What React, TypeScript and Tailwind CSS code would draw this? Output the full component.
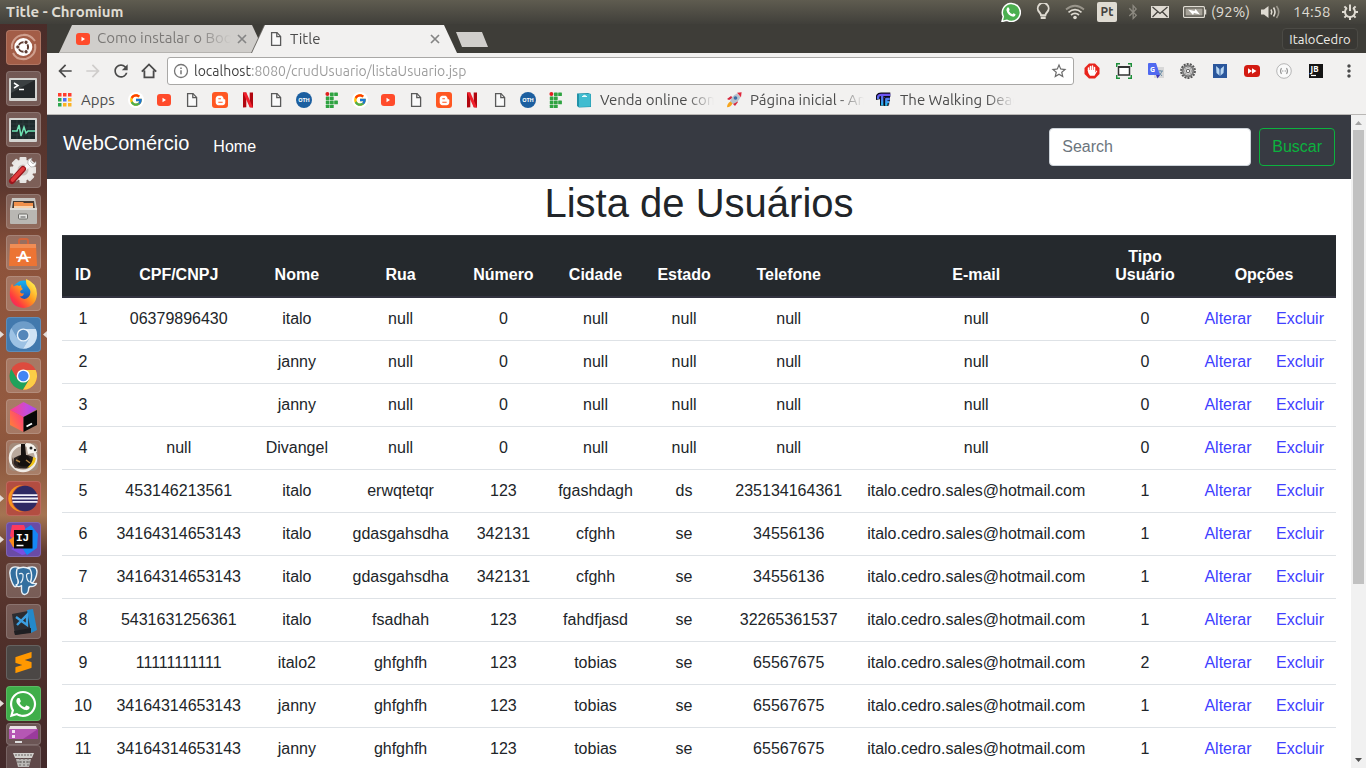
import React from "react";
import { FaWhatsapp, FaBluetoothB, FaBloggerB } from "react-icons/fa";
import { FcGoogle } from "react-icons/fc";
import { SiSublimetext } from "react-icons/si";
import { MdRefresh, MdArrowBack, MdArrowForward, MdStarBorder, MdMoreVert } from "react-icons/md";

/* ---------- small shared icons ---------- */

const YouTube = () => (
  <svg width="16" height="16" viewBox="0 0 16 16" className="shrink-0">
    <rect x="1" y="2" width="14" height="12" rx="3" fill="#ff4b2b" />
    <path d="M6.5 5.8 L10 8 L6.5 10.2Z" fill="#fff" />
  </svg>
);

const Doc = () => (
  <svg width="16" height="16" viewBox="0 0 16 16" fill="none" stroke="#5a5a5a" strokeWidth="1.3" className="shrink-0">
    <path d="M3.6 1.6 H9 L12.6 5.4 V14.4 H3.6Z" fill="#fafafa" />
    <path d="M8.8 1.6 V5.6 H12.6" />
  </svg>
);

const Google = () => (
  <span className="flex h-4 w-4 items-center justify-center rounded-full bg-white">
    <FcGoogle size={14} />
  </span>
);

const Blogger = () => (
  <span className="flex h-4 w-4 items-center justify-center rounded-[3px] bg-[#ff5722]">
    <FaBloggerB size={11} color="#fff" />
  </span>
);

const Netflix = () => (
  <svg width="16" height="16" viewBox="0 0 16 16">
    <path d="M3 0.5 H6.3 V15.2 L3 15.6Z" fill="#b1060f" />
    <path d="M9.7 0.5 H13 V15.6 L9.7 15.2Z" fill="#b1060f" />
    <path d="M3 0.5 H6.3 L13 15.6 L9.7 15.2Z" fill="#f0202c" />
  </svg>
);

const Oth = () => (
  <svg width="16" height="16" viewBox="0 0 16 16">
    <circle cx="8" cy="8" r="8" fill="#1c5fa0" />
    <text x="8" y="10" textAnchor="middle" fontSize="5.5" fontWeight="700" fill="#fff" fontFamily="Noto Sans, sans-serif">OTH</text>
  </svg>
);

const ifCells = [[1, 0], [2, 0], [0, 1], [1, 1], [0, 2], [1, 2], [2, 2], [0, 3], [1, 3]];
const IfLogo = () => (
  <svg width="16" height="16" viewBox="0 0 16 16">
    <circle cx="3.4" cy="2" r="2" fill="#e02020" />
    {ifCells.map(([x, y]) => (
      <rect key={`${x}-${y}`} x={1.8 + x * 4.2} y={0.4 + y * 4.1} width="3.7" height="3.6" rx="0.5" fill="#2fa341" />
    ))}
  </svg>
);

const Bag = () => (
  <svg width="16" height="16" viewBox="0 0 16 16">
    <path d="M1 1.5 L12 1 L15 2 V15 L3 15.5 L1 14Z" fill="#2292a8" />
    <path d="M3 2 H14.5 V14.5 L3 15Z" fill="#41bcd0" />
    <path d="M6 4.5 H11 M7 4.5 Q8.5 2 10 4.5" stroke="#e8fafc" strokeWidth="1.2" fill="none" />
  </svg>
);

const Rocket = () => (
  <svg width="16" height="16" viewBox="0 0 16 16">
    <path d="M1 7 L5 4 L7 6 L3 8Z M9 14 L12 10 L10 8 L7 12Z" fill="#d7263d" />
    <path d="M4 10 Q5 4 11 1.5 L14.5 5 Q12 11 6 12Z" fill="#b7c3cf" />
    <path d="M11 0.8 L15.6 0.2 L15 5.2Z" fill="#e0273c" />
    <circle cx="9.5" cy="6" r="1.8" fill="#3b6ea5" />
    <path d="M4.5 9.5 L6.5 11.5 Q5 15 1 15.2 Q1 11.5 4.5 9.5Z" fill="#f6a51c" />
  </svg>
);

const TfLogo = () => (
  <svg width="16" height="16" viewBox="0 0 16 16" fill="none" strokeLinejoin="round">
    <defs>
      <linearGradient id="tf" gradientUnits="userSpaceOnUse" x1="0" y1="1" x2="0" y2="15">
        <stop offset="0" stopColor="#7b3ff2" />
        <stop offset="1" stopColor="#19d3f0" />
      </linearGradient>
    </defs>
    <path d="M2.2 7.500 Q1 2.800 5 2.800 H14.300 M6.200 3 V13.800 M10.300 14 V7 H14 M10.300 10.200 H13.200" stroke="#0b0b1e" strokeWidth="4.400" />
    <path d="M2.2 7 Q1.400 2.800 5 2.800 H14.300 M6.200 3 V13.500 M10.300 13.700 V7 H13.800 M10.300 10.200 H13" stroke="url(#tf)" strokeWidth="2.300" />
  </svg>
);

const CloseX = () => (
  <svg width="10" height="10" viewBox="0 0 10 10" stroke="#858585" strokeWidth="1.7">
    <path d="M1 1 L9 9 M9 1 L1 9" />
  </svg>
);

/* ---------- launcher ---------- */

const Disc = ({ a, b, c, hub, ring }: { a: string; b: string; c: string; hub: string; ring: string }) => (
  <svg width="35" height="35" viewBox="0 0 35 35">
    <circle cx="17.3" cy="18" r="13.8" fill={a} />
    <path d="M5.3 11.1 A13.8 13.8 0 0 0 17 31.8 L23.2 21.5 L17.3 18 L11.4 21.5Z" fill={b} />
    <path d="M17 31.8 A13.8 13.8 0 0 0 29.7 12 H17.3 L23.2 21.5Z" fill={c} />
    <circle cx="17.3" cy="18" r="6.6" fill={ring} />
    <circle cx="17.3" cy="18" r="5.2" fill={hub} />
  </svg>
);

const teeth = [0, 45, 90, 135, 180, 225, 270, 315];

type App = { name: string; tile?: string; running?: boolean; focused?: boolean; art: React.ReactNode };

const apps: App[] = [
  {
    name: "Pesquisar",
    tile: "bg-[#a35d47]",
    art: (
      <svg width="35" height="35" viewBox="0 0 35 35" fill="none">
        <path d="M6 19 A12 12 0 0 1 17 5 Q24 4 29 11 M29 14 Q31 25 20 29 Q10 30 7 23" stroke="#cf9f8e" strokeWidth="2" />
        <circle cx="17.3" cy="17" r="9" fill="#fff" />
        <circle cx="17.3" cy="17" r="4.800" stroke="#5e3c32" strokeWidth="2" />
        {[180, 60, -60].map((d) => (
          <g key={d} transform={`rotate(${d} 17.3 17)`}>
            <circle cx="22.800" cy="17" r="2.100" fill="#5e3c32" stroke="#fff" strokeWidth="0.900" />
          </g>
        ))}
      </svg>
    ),
  },
  {
    name: "Terminal",
    art: (
      <svg width="35" height="35" viewBox="0 0 35 35">
        <rect x="3" y="7" width="28" height="23" rx="1" fill="#d3d3d0" />
        <rect x="5" y="9" width="24" height="18" fill="#24282a" />
        <path d="M5 9 H29 L5 22Z" fill="#3b4042" />
        <path d="M8 12 L12 14.5 L8 17 M13 18.5 H18" stroke="#fff" strokeWidth="1.5" fill="none" />
      </svg>
    ),
  },
  {
    name: "Monitor do sistema",
    art: (
      <svg width="35" height="35" viewBox="0 0 35 35">
        <rect x="3" y="6" width="28" height="24" rx="1" fill="#d3d3d0" />
        <rect x="5" y="8" width="24" height="19" fill="#1e2a2c" />
        <path d="M5 12 H29 M5 16 H29 M5 23 H29 M11 8 V27 M17 8 V27 M23 8 V27" stroke="#344548" strokeWidth="0.6" />
        <path d="M6 19 H11 L13 13 L15 24 L18 15 L20 21 L22 19 H29" stroke="#6fe3b4" strokeWidth="1.5" fill="none" />
      </svg>
    ),
  },
  {
    name: "Configurações",
    art: (
      <svg width="35" height="35" viewBox="0 0 35 35">
        {teeth.map((d) => (
          <rect key={d} x="13.5" y="4" width="7" height="6" rx="1" fill="#e6e4e2" transform={`rotate(${d} 17 17)`} />
        ))}
        <circle cx="17" cy="17" r="10.5" fill="#eceae8" />
        <circle cx="17" cy="17" r="5.5" fill="#c7c1bd" />
        <path d="M17 17 L24 11" stroke="#f7f7f7" strokeWidth="4" />
        <path d="M22 11 Q21 6 26 5 L24.5 8.5 L27 11 L30 8.5 Q31 14 25 14Z" fill="#fff" stroke="#999" strokeWidth="0.6" />
        <path d="M6 28 L17 16" stroke="#98161c" strokeWidth="6" strokeLinecap="round" />
        <path d="M6.5 27 L17 15.8" stroke="#e03a3c" strokeWidth="3.6" strokeLinecap="round" />
      </svg>
    ),
  },
  {
    name: "Arquivos",
    art: (
      <svg width="35" height="35" viewBox="0 0 35 35">
        <path d="M6 4 H29 L31 15 H4Z" fill="#c9c7c3" />
        <path d="M7 7 H28 L29 15 H6Z" fill="#473a33" />
        <path d="M8 8 H17 L18 9 H27 V15 H8Z" fill="#f0904c" />
        <path d="M8 12 H27 V15 H8Z" fill="#f7d2ae" />
        <rect x="4" y="14" width="27" height="16" rx="1" fill="#b9b7b3" />
        <path d="M4 15 H31" stroke="#e8e7e5" strokeWidth="1.5" />
        <rect x="12.5" y="20" width="9" height="5" rx="1" fill="#e6e6e4" stroke="#6d6c69" />
        <path d="M14.5 23 H19.5" stroke="#555" />
      </svg>
    ),
  },
  {
    name: "Programas",
    art: (
      <svg width="35" height="35" viewBox="0 0 35 35">
        <path d="M13 10 V6 Q13 4 15 4 H20 Q22 4 22 6 V10" stroke="#d1643c" strokeWidth="2" fill="none" />
        <path d="M4 9 H30 L31 31 H3Z" fill="#ec7434" />
        <path d="M4 9 H30 V13 H4Z" fill="#f08d55" />
        <text x="17.3" y="27" fontSize="16" fontWeight="700" textAnchor="middle" fill="#fff" fontFamily="Lato, sans-serif">A</text>
        <path d="M10 22.5 H25" stroke="#fff" strokeWidth="1.6" />
      </svg>
    ),
  },
  {
    name: "Firefox",
    art: (
      <svg width="35" height="35" viewBox="0 0 35 35">
        <defs>
          <linearGradient id="fx" x1="1" y1="0" x2="0" y2="1">
            <stop offset="0.1" stopColor="#fff44f" />
            <stop offset="0.45" stopColor="#ff9a1f" />
            <stop offset="0.75" stopColor="#ff3a3f" />
            <stop offset="1" stopColor="#e3167f" />
          </linearGradient>
          <linearGradient id="fxb" x1="0" y1="0" x2="0" y2="1">
            <stop offset="0" stopColor="#16b4f2" />
            <stop offset="1" stopColor="#2438a8" />
          </linearGradient>
        </defs>
        <circle cx="18" cy="16" r="11.5" fill="url(#fxb)" />
        <path d="M20 3 Q31 7 31 18 Q30 31 17.5 32 Q5 31 3.8 19 Q3.5 12 6 7.500 L7.500 10.500 L10 9.500 Q12 9 13 10 L15 9 Q15 12 17 13 Q14 14.500 14 16 Q15 18 18 17.500 Q17 21 13.500 20.500 Q18 25 22.500 21 Q26.500 16 22 11 Q19.500 8 20 3Z" fill="url(#fx)" />
      </svg>
    ),
  },
  { name: "Chromium", tile: "bg-[#4279ad]", running: true, focused: true, art: <Disc a="#6e9dc9" b="#9dc2e4" c="#cfe3f5" hub="#5386ba" ring="#e8f2fb" /> },
  { name: "Google Chrome", art: <Disc a="#dd4b3e" b="#1fa25b" c="#fccd46" hub="#4285f4" ring="#fff" /> },
  {
    name: "JetBrains Toolbox",
    art: (
      <svg width="35" height="35" viewBox="0 0 35 35">
        <defs>
          <linearGradient id="tbTop" x1="0" y1="0.5" x2="1" y2="0.5">
            <stop offset="0" stopColor="#ff3f86" />
            <stop offset="0.6" stopColor="#c94bd8" />
            <stop offset="1" stopColor="#a64bf0" />
          </linearGradient>
          <linearGradient id="tbLeft" x1="1" y1="0" x2="0" y2="1">
            <stop offset="0" stopColor="#ff318c" />
            <stop offset="1" stopColor="#ff8a2b" />
          </linearGradient>
        </defs>
        <path d="M17.500 3 L31 10 L17.500 18 L4 11Z" fill="url(#tbTop)" />
        <path d="M4 11 L17.500 18 V33 L4 26Z" fill="url(#tbLeft)" />
        <path d="M17.500 18 L31 11 V26 L17.500 33Z" fill="#080808" />
        <path d="M20.500 27.500 L26 24.500" stroke="#fff" strokeWidth="1.8" />
      </svg>
    ),
  },
  {
    name: "DBeaver",
    art: (
      <svg width="35" height="35" viewBox="0 0 35 35">
        <rect x="3" y="3" width="29" height="28" rx="5" fill="#a28b7b" />
        <circle cx="17" cy="18" r="13" fill="#b9a99d" stroke="#f1ece6" strokeWidth="2.500" />
        <path d="M20 3 Q30 3 31 12 L22 14Z" fill="#f7f4ee" />
        <path d="M7 17 Q8 27 16 29 L9 28 Q4 23 7 17Z" fill="#5b4a3f" />
        <path d="M8 18 Q17 12 27 17 Q29 24 22 28 Q12 30 8 24Z" fill="#2b2320" />
        <path d="M15 4 H19 L20 15 Q25 17 24 25 Q19 28 12 25 Q11 17 15 15Z" fill="#15110f" />
        <path d="M21 28 Q29 26 30 18 L27 17 Q27 23 21 28Z" fill="#f0c419" />
        <circle cx="25" cy="8" r="1.500" fill="#222" />
        <circle cx="29" cy="10" r="1.200" fill="#222" />
        <path d="M10 20 L14 22 M20 20 L24 23" stroke="#b08445" strokeWidth="1.500" />
      </svg>
    ),
  },
  {
    name: "Eclipse",
    tile: "bg-[#b34d41]",
    running: true,
    art: (
      <svg width="35" height="35" viewBox="0 0 35 35">
        <circle cx="15.500" cy="17.500" r="13.200" fill="#f7941e" />
        <circle cx="18.800" cy="17.500" r="13.400" fill="#b34d41" />
        <circle cx="19" cy="17.500" r="12.700" fill="#2f2a63" />
        <path d="M6.500 14.200 H31.500 M6 17.500 H32 M6.500 20.800 H31.500" stroke="#f2f0fa" strokeWidth="1.800" />
      </svg>
    ),
  },
  {
    name: "IntelliJ IDEA",
    tile: "bg-[#6a4ba6]",
    running: true,
    art: (
      <svg width="35" height="35" viewBox="0 0 35 35">
        <path d="M6 3 H18 L22 14 L12 22 L4 14Z" fill="#fb3a5e" />
        <path d="M3 18 L12 12 L14 28 L7 25Z" fill="#f98a1c" />
        <path d="M19 7 L25 3 L32 12 L31 26 L21 33 L16 27Z" fill="#1587f5" />
        <path d="M5 27 L14 22 L20 32 L16 33Z" fill="#7a4fe0" />
        <rect x="8" y="8" width="18.500" height="18.500" fill="#080808" />
        <text x="10" y="18.500" fontSize="11" fontWeight="700" fill="#fff" fontFamily="Liberation Mono, monospace">IJ</text>
        <path d="M10.500 23.500 H17.500" stroke="#fff" strokeWidth="1.500" />
      </svg>
    ),
  },
  {
    name: "pgAdmin",
    art: (
      <svg width="35" height="35" viewBox="0 0 35 35" fill="#336f9f" stroke="#e9f1f7" strokeWidth="1.400" strokeLinejoin="round">
        <path d="M13 4.500 Q4 2 3.800 10 Q4.500 18 8 23 Q10 25 12 21.500Z" />
        <path d="M22 4.500 Q31 2 31 9 Q30.500 16 25.500 21 L21 20Z" />
        <path d="M11 6 Q17 2.500 24 6 Q27 12 24.500 19 Q26 21 30.500 20.500 Q29 24 24 23.500 Q22.500 24 22.500 27 Q22 31 18.500 31.500 Q15.500 31 15.500 27 V22.500 Q12 25 10 22 Q13.500 20.500 12 17 Q9.500 12 11 6Z" />
        <path d="M13 11 Q15.500 9.500 17 11.500 Q17.500 17 14.500 20 M23.500 10.500 Q21 10 20.500 12 Q20.500 17 23.500 19" fill="none" strokeWidth="1.200" />
      </svg>
    ),
  },
  {
    name: "Visual Studio Code",
    art: (
      <svg width="35" height="35" viewBox="0 0 35 35">
        <path d="M6 10 L22 7 L26 28 L9 31Z" fill="#2c2c30" />
        <path d="M21 6 L27 5 L31 26 L25 29Z" fill="#2489ca" />
        <path d="M8 27 L25 24 V29 L9 31Z" fill="#1f1f22" />
        <path d="M10 13 L21 21 V11 L11 21" stroke="#3c9fe0" strokeWidth="2.400" fill="none" />
      </svg>
    ),
  },
  { name: "Sublime Text", tile: "bg-[#4b4745]", art: <SiSublimetext size={21} color="#ff9800" /> },
  { name: "WhatsApp", tile: "bg-[#3fae49]", running: true, art: <FaWhatsapp size={30} color="#fff" /> },
];

const Marker = ({ side }: { side: "left" | "right" }) => (
  <svg width="4" height="7" viewBox="0 0 4 7" className={side === "left" ? "absolute left-0 top-[14px]" : "absolute right-0 top-[14px]"}>
    <path d={side === "left" ? "M0 0 L4 3.500 L0 7Z" : "M4 0 L0 3.500 L4 7Z"} fill="#e4dcd8" />
  </svg>
);

const tileBase = "flex h-[35px] w-[35px] items-center justify-center overflow-hidden rounded-[4px] border border-white/15 [&>svg]:shrink-0";

const Launcher = () => (
  <nav
    aria-label="Lançador"
    className="flex w-[47px] shrink-0 flex-col gap-[6px] overflow-hidden bg-[linear-gradient(to_bottom,#4a2c29_0%,#5d382f_22%,#8d533b_32%,#935a40_52%,#8b563d_58%,#a57452_66%,#5f3a31_71%,#50302a_82%,#43292a_100%)] pt-[6px]"
  >
    {apps.map((a) => (
      <div key={a.name} className="relative flex shrink-0 justify-center pr-px">
        {a.running && <Marker side="left" />}
        <button type="button" aria-label={a.name} className={`${tileBase} ${a.tile ?? "bg-white/20"}`}>
          {a.art}
        </button>
        {a.focused && <Marker side="right" />}
      </div>
    ))}
    <div className="-mt-[4px] flex shrink-0 flex-col items-center">
      <button type="button" aria-label="Área de trabalho" className="h-[22px] w-[35px] rounded-[4px] border border-white/15 bg-white/20">
        <svg width="33" height="20" viewBox="0 0 33 20">
          <path d="M3 2 H29 L30 5 H2Z" fill="#e9e1e6" />
          <path d="M2 5 H31 V15 H2Z" fill="#9a3a9c" />
          <path d="M2 5 H31 L16 15 H2Z" fill="#b557b4" />
          <rect x="5" y="6" width="3" height="3" fill="#f1e4f1" />
          <rect x="5" y="11" width="3" height="3" fill="#f1e4f1" />
          <rect x="8" y="17" width="7" height="2" fill="#ddd" />
        </svg>
      </button>
      <button type="button" aria-label="Lixeira" className="h-[26px] w-[35px] rounded-[4px] border border-white/15 bg-white/15">
        <svg width="33" height="24" viewBox="0 0 33 24">
          <path d="M6 7 H27 L25 12 H8Z" fill="#d2d0cd" />
          <path d="M9 13 H24 L22 21 H11Z" fill="#bab8b5" />
          <path d="M8 9 H25 M10 16 H23 M13 12 V20 M17 12 V20 M21 12 V20" stroke="#6b6765" strokeDasharray="2 1" />
        </svg>
      </button>
    </div>
  </nav>
);

/* ---------- system bar ---------- */

const SystemBar = () => (
  <header className="flex h-6 shrink-0 items-center justify-between bg-[linear-gradient(to_bottom,#5f5c50,#403f3a)] pl-[6px] pr-2 text-[#dfdbd2]">
    <h1 className="text-[15px] font-bold">Title - Chromium</h1>
    <div className="flex items-center">
      <svg width="20" height="20" viewBox="0 0 20 20" className="mr-3">
        <path d="M1 19.500 L2.300 14.500 A9 9 0 1 1 5.800 18.200Z" fill="#4caf50" stroke="#fff" strokeWidth="1.500" />
        <path d="M6 6.200 Q7 4.600 8 6 L8.700 7.900 L7.900 9 Q9 11.200 11.400 12.300 L12.500 11.300 L14.600 12.300 Q14.500 14.700 12.300 14.700 Q7 14 5.500 8.500 Q5.300 7.300 6 6.200Z" fill="#fff" />
      </svg>
      <svg width="20" height="18" viewBox="0 0 20 18" className="mr-3" fill="none" stroke="#dfdbd2" strokeWidth="1.900">
        <path d="M8 12.200 Q7.900 10.800 6.200 9 A5.400 5.400 0 1 1 14.200 9 Q12.500 10.800 12.400 12.200Z" />
        <path d="M7.700 13.500 H12.700 V16 H7.700Z" fill="#dfdbd2" stroke="none" />
      </svg>
      <svg width="20" height="16" viewBox="0 0 20 16" className="mr-3" fill="none" strokeWidth="1.700">
        <path d="M1 5.500 Q10 -2 19 5.500" stroke="#99958b" />
        <path d="M3.500 8.300 Q10 3 16.500 8.300 M6 11 Q10 7.700 14 11" stroke="#dfdbd2" />
        <circle cx="10" cy="13.500" r="1.800" fill="#dfdbd2" />
      </svg>
      <span className="mr-2 flex h-5 w-5 items-center justify-center rounded-[2px] bg-[#dfdbd2] text-xs font-semibold text-[#45433e]">Pt</span>
      <FaBluetoothB size={16} color="#8d8a81" className="mr-[10px]" />
      <svg width="18" height="12" viewBox="0 0 18 12" className="mr-[14px]">
        <rect width="18" height="12" fill="#dfdbd2" />
        <path d="M1.500 1 L9 7.500 L16.500 1 M1.500 11 L6.500 6 M16.500 11 L11.500 6" stroke="#45433e" strokeWidth="1.300" fill="none" />
      </svg>
      <svg width="24" height="12" viewBox="0 0 24 12" className="mr-1">
        <rect x="0.600" y="0.600" width="20.800" height="10.800" rx="1" fill="none" stroke="#dfdbd2" strokeWidth="1.200" />
        <rect x="2.500" y="2.500" width="17" height="7" fill="#a5a197" />
        <path d="M22.500 3.500 V8.500" stroke="#dfdbd2" strokeWidth="1.500" />
        <path d="M5 3.500 L11.500 5 L12.500 3 L17 8.500 L11 7 L10 9Z" fill="#fff" />
      </svg>
      <span className="mr-3 w-[38px] text-[15px]">(92%)</span>
      <svg width="20" height="14" viewBox="0 0 20 14" className="mr-3" fill="none" strokeWidth="1.600">
        <path d="M0 4.500 H3 L7.500 1 V13 L3 9.500 H0Z" fill="#dfdbd2" />
        <path d="M10 4.500 Q11.500 7 10 9.500 M12.500 2.500 Q15.500 7 12.500 11.500" stroke="#dfdbd2" />
        <path d="M15.500 1 Q20 7 15.500 13" stroke="#99958b" />
      </svg>
      <time className="mr-3 w-[37px] text-[15px]">14:58</time>
      <svg width="16" height="16" viewBox="0 0 16 16" fill="none" stroke="#dfdbd2">
        <path d="M5 4 A5 5 0 1 0 11 4" strokeWidth="2" />
        <path d="M8 0.500 V7" strokeWidth="2" />
        <path d="M0 8 H3 M13 8 H16 M8 13 V16 M2.400 13.600 L4.500 11.500 M13.600 13.600 L11.500 11.500 M2.400 2.400 L4.500 4.500 M13.600 2.400 L11.500 4.500" strokeWidth="2" />
      </svg>
    </div>
  </header>
);

/* ---------- browser chrome ---------- */

const TabStrip = () => (
  <div className="flex h-[29px] items-end bg-[#3e3d38] pl-3 pr-2">
    <div className="flex h-7 w-[206px] items-center gap-[6px] border-b border-[#b5b3b0] bg-[#d0cecb] pl-4 pr-[18px] text-[#7b7977] [clip-path:polygon(13px_0,calc(100%-13px)_0,100%_100%,0_100%)]">
      <YouTube />
      <span className="min-w-0 flex-1 overflow-hidden whitespace-nowrap text-[15px] [mask-image:linear-gradient(to_right,black_75%,transparent)]">
        Como instalar o Boo
      </span>
      <button type="button" aria-label="Fechar aba"><CloseX /></button>
    </div>
    <div className="relative -ml-[13px] [filter:drop-shadow(-1px_0_0_#6b6965)]">
      <div className="flex h-7 w-[205px] items-center gap-[6px] bg-[#f2f1f0] pl-4 pr-[17px] text-[#4c4c4c] [clip-path:polygon(13px_0,calc(100%-13px)_0,100%_100%,0_100%)]">
        <Doc />
        <span className="flex-1 text-[15px]">Title</span>
        <button type="button" aria-label="Fechar aba"><CloseX /></button>
      </div>
    </div>
    <button
      type="button"
      aria-label="Nova aba"
      className="-ml-px mb-[6px] h-[15px] w-8 bg-[#d0cecb] [clip-path:polygon(0_0,26px_0,100%_100%,6px_100%)]"
    />
    <button type="button" className="mb-[3px] ml-auto h-[22px] w-[76px] rounded-[4px] border border-[#4b4a45] bg-[#393834] text-[13px] leading-5 text-[#f0eee9]">
      ItaloCedro
    </button>
  </div>
);

const extensions: { name: string; art: React.ReactNode }[] = [
  {
    name: "AdBlock",
    art: (
      <svg width="16" height="16" viewBox="0 0 16 16">
        <path d="M5 0.500 H11 L15.500 5 V11 L11 15.500 H5 L0.500 11 V5Z" fill="#e8241c" />
        <path d="M4.500 8 V5 M6.500 7.500 V3.500 M8.500 7.500 V3 M10.500 8 V4.500" stroke="#fff" strokeWidth="1.500" strokeLinecap="round" />
        <path d="M3.800 7 H11.200 V9.500 L12.500 7.500 L13.300 8 L10.500 12.800 H6 Q3.800 11 3.800 7Z" fill="#fff" />
      </svg>
    ),
  },
  {
    name: "Captura de tela",
    art: (
      <svg width="16" height="16" viewBox="0 0 16 16" fill="none">
        <rect x="2.500" y="4" width="11" height="8" fill="#fff" stroke="#333" strokeWidth="1.500" />
        <path d="M2 4 H14" stroke="#333" strokeWidth="2" />
        <path d="M0.700 4 V0.700 H4 M12 0.700 H15.300 V4 M0.700 12 V15.300 H4 M12 15.300 H15.300 V12" stroke="#1e8f3a" strokeWidth="1.500" />
      </svg>
    ),
  },
  {
    name: "Google Tradutor",
    art: (
      <svg width="16" height="16" viewBox="0 0 16 16">
        <rect x="6" y="4" width="10" height="11" fill="#d8d8d8" />
        <path d="M9 8 H15 M12 7 V8 M14 8 Q13 11.500 10 13 M10.500 9 L14 13" stroke="#6c8fa8" fill="none" />
        <path d="M0 1 Q0 0 1 0 H8 L12 12 H1 Q0 12 0 11Z" fill="#5069f0" />
        <path d="M8 12 H12 L9.500 15.500Z" fill="#3b35b5" />
        <text x="2" y="8.500" fontSize="7" fontWeight="700" fill="#fff" fontFamily="Noto Sans, sans-serif">G</text>
      </svg>
    ),
  },
  {
    name: "Ajustes",
    art: (
      <svg width="16" height="16" viewBox="0 0 16 16" fill="none">
        <circle cx="8" cy="8" r="6.800" stroke="#555" strokeWidth="2.200" strokeDasharray="2 1.050" />
        <circle cx="8" cy="8" r="4.600" stroke="#7d7d7d" strokeWidth="3.400" />
        <circle cx="8" cy="8" r="4" stroke="#c6c6c6" />
        <circle cx="8" cy="8" r="1.800" fill="#eee" stroke="#555" />
      </svg>
    ),
  },
  {
    name: "Marcador",
    art: (
      <svg width="16" height="16" viewBox="0 0 16 16">
        <rect x="1" y="1" width="14" height="14" fill="#2b579c" />
        <path d="M4 3 L7.500 6 L8 7 L9 5.500 L12 3 L11.500 10 L8 13 L4.500 10Z" fill="#b9d7f2" />
        <path d="M8 6 V13" stroke="#2b579c" />
      </svg>
    ),
  },
  {
    name: "Enhancer",
    art: (
      <svg width="16" height="16" viewBox="0 0 16 16">
        <rect x="0" y="2" width="16" height="12" rx="3.500" fill="#d31b12" />
        <path d="M4 5.200 L8 8 L4 10.800Z M8 5.200 L12.500 8 L8 10.800Z" fill="#fff" />
      </svg>
    ),
  },
  {
    name: "JSON",
    art: (
      <svg width="16" height="16" viewBox="0 0 16 16" fill="none" stroke="#999">
        <circle cx="8" cy="8" r="7.300" fill="#fafafa" stroke="#b5b5b5" />
        <path d="M5.500 5 Q3.500 8 5.500 11 M10.500 5 Q12.500 8 10.500 11 M6 8 H7.400 M8.600 8 H10" strokeWidth="1.200" />
      </svg>
    ),
  },
  {
    name: "JetBrains",
    art: (
      <svg width="16" height="16" viewBox="0 0 16 16">
        <rect x="1" y="1" width="14" height="14" fill="#141414" />
        <text x="2.500" y="9" fontSize="8" fontWeight="700" fill="#fff" fontFamily="Noto Sans, sans-serif">JB</text>
        <path d="M3 12.500 H8" stroke="#fff" strokeWidth="1.200" />
      </svg>
    ),
  },
];

const Toolbar = () => (
  <div className="flex h-9 items-center bg-[#f2f1f0] px-2 text-[#4c4c4c]">
    <div className="flex gap-2">
      <button type="button" aria-label="Voltar"><MdArrowBack size={20} color="#4a4a4a" /></button>
      <button type="button" aria-label="Avançar"><MdArrowForward size={20} color="#cfcdcb" /></button>
      <button type="button" aria-label="Recarregar"><MdRefresh size={20} color="#4a4a4a" /></button>
      <button type="button" aria-label="Página inicial">
        <svg width="20" height="20" viewBox="0 0 20 20" fill="none" stroke="#4a4a4a" strokeWidth="1.800">
          <path d="M2.800 10.600 L10 3.400 L17.200 10.600 M5.400 9.500 V16.300 H14.600 V9.500" />
        </svg>
      </button>
    </div>
    <form className="mx-2 mr-[10px] flex h-7 flex-1 items-center gap-[5px] rounded-[3px] border border-[#a9a8a6] bg-white px-[5px]">
      <svg width="16" height="16" viewBox="0 0 16 16" fill="none" stroke="#757575" strokeWidth="1.300">
        <circle cx="8" cy="8" r="6.500" />
        <path d="M8 7.300 V11.300 M8 4.500 V6" strokeWidth="1.500" />
      </svg>
      <input
        aria-label="Endereço"
        defaultValue="localhost:8080/crudUsuario/listaUsuario.jsp"
        className="h-6 min-w-0 flex-1 bg-[linear-gradient(to_right,#3c3c3c_57px,#9a9a9a_57px)] bg-clip-text text-sm text-transparent outline-none"
      />
      <button type="button" aria-label="Favoritar"><MdStarBorder size={18} color="#6a6a6a" /></button>
    </form>
    <div className="flex items-center gap-4">
      {extensions.map((e) => (
        <button key={e.name} type="button" aria-label={e.name}>{e.art}</button>
      ))}
      <button type="button" aria-label="Menu" className="-mx-px"><MdMoreVert size={20} color="#4a4a4a" /></button>
    </div>
  </div>
);

const shortcuts = [Google, YouTube, Doc, Blogger, Netflix, Doc, Oth, IfLogo, Google, YouTube, Doc, Blogger, Netflix, Doc, Oth, IfLogo];
const named: [React.FC, string][] = [
  [Bag, "Venda online com"],
  [Rocket, "Página inicial - An"],
  [TfLogo, "The Walking Dead"],
];
const dotColors = ["#ff3d2e", "#ff3d2e", "#ff3d2e", "#2da84f", "#4a6cf7", "#fbb324", "#2da84f", "#fbb324", "#fbb324"];

const Bookmarks = () => (
  <div className="flex h-[26px] items-center gap-3 border-b border-[#b9b7b5] bg-[#f2f1f0] pb-[3px] pl-[9px] text-[15px] text-[#4c4c4c]">
    <a href="#apps" className="flex items-center gap-2">
      <svg width="17" height="16" viewBox="0 0 17 16">
        {dotColors.map((c, i) => (
          <rect key={i} x={2 + (i % 3) * 5} y={1 + Math.floor(i / 3) * 5} width="3.500" height="3.500" fill={c} />
        ))}
      </svg>
      <span className="w-[35px]">Apps</span>
    </a>
    {shortcuts.map((Icon, i) => (
      <a key={i} href="#favorito" aria-label={`Favorito ${i + 1}`}><Icon /></a>
    ))}
    {named.map(([Icon, label]) => (
      <a key={label} href="#favorito" className="flex items-center gap-2">
        <Icon />
        <span className="w-[114px] overflow-hidden whitespace-nowrap [mask-image:linear-gradient(to_right,black_76%,transparent)]">{label}</span>
      </a>
    ))}
  </div>
);

/* ---------- page ---------- */

const headers = ["ID", "CPF/CNPJ", "Nome", "Rua", "Número", "Cidade", "Estado", "Telefone", "E-mail"];
const mail = "italo.cedro.sales@hotmail.com";
const rows: string[][] = [
  ["1", "06379896430", "italo", "null", "0", "null", "null", "null", "null", "0"],
  ["2", "", "janny", "null", "0", "null", "null", "null", "null", "0"],
  ["3", "", "janny", "null", "0", "null", "null", "null", "null", "0"],
  ["4", "null", "Divangel", "null", "0", "null", "null", "null", "null", "0"],
  ["5", "453146213561", "italo", "erwqtetqr", "123", "fgashdagh", "ds", "235134164361", mail, "1"],
  ["6", "34164314653143", "italo", "gdasgahsdha", "342131", "cfghh", "se", "34556136", mail, "1"],
  ["7", "34164314653143", "italo", "gdasgahsdha", "342131", "cfghh", "se", "34556136", mail, "1"],
  ["8", "5431631256361", "italo", "fsadhah", "123", "fahdfjasd", "se", "32265361537", mail, "1"],
  ["9", "11111111111", "italo2", "ghfghfh", "123", "tobias", "se", "65567675", mail, "2"],
  ["10", "34164314653143", "janny", "ghfghfh", "123", "tobias", "se", "65567675", mail, "1"],
  ["11", "34164314653143", "janny", "ghfghfh", "123", "tobias", "se", "65567675", mail, "1"],
];

const Page = () => (
  <main className="min-w-0 flex-1 overflow-hidden bg-white font-['Liberation_Sans',Arial,sans-serif] text-base text-[#212529]">
    <nav className="flex h-16 items-center bg-[#373a42] px-4 text-white">
      <a href="#inicio" className="mb-2 mr-6 text-xl">WebComércio</a>
      <a href="#home">Home</a>
      <form className="ml-auto flex gap-2">
        <input
          type="search"
          aria-label="Search"
          placeholder="Search"
          className="h-[38px] w-[202px] rounded-[4px] border border-[#ced4da] bg-white px-3 text-[#495057] placeholder:text-[#6c757d]"
        />
        <button type="button" className="h-[38px] rounded-[4px] border border-[#0bb23e] px-3 text-[#0bb23e]">Buscar</button>
      </form>
    </nav>
    <section className="px-[15px]">
      <h2 className="mb-2 text-center text-[40px] leading-[48px]">Lista de Usuários</h2>
      <table className="w-full border-collapse text-center leading-[18px]">
        <colgroup>
          <col span={9} />
          <col className="w-[94px]" />
          <col span={2} className="w-[72px]" />
        </colgroup>
        <thead>
          <tr className="border-t border-b-2 border-t-[#32363c] border-b-[#32333f] bg-[#25292d] align-bottom text-white">
            {headers.map((h) => (
              <th key={h} className="p-3 font-bold">{h}</th>
            ))}
            <th className="p-3 font-bold">Tipo Usuário</th>
            <th colSpan={2} className="p-3 font-bold">Opções</th>
          </tr>
        </thead>
        <tbody>
          {rows.map((r) => (
            <tr key={r[0]} className="border-b border-[#dee2e6]">
              {r.map((c, i) => (
                <td key={i} className="p-3">{c}</td>
              ))}
              <td className="p-3"><a href="#alterar" className="text-[#4040ff]">Alterar</a></td>
              <td className="p-3"><a href="#excluir" className="text-[#4040ff]">Excluir</a></td>
            </tr>
          ))}
        </tbody>
      </table>
    </section>
  </main>
);

const Scrollbar = () => (
  <div className="flex w-[15px] shrink-0 flex-col items-center bg-[#f1f1f1]">
    <svg width="15" height="15" viewBox="0 0 15 15" className="shrink-0"><path d="M4 10 L7.500 6 L11 10Z" fill="#a3a3a3" /></svg>
    <div className="w-[11px] grow-[454] basis-0 bg-[#c1c1c1]" />
    <div className="grow-[169] basis-0" />
    <svg width="15" height="15" viewBox="0 0 15 15" className="shrink-0"><path d="M4 5 L7.500 9 L11 5Z" fill="#505050" /></svg>
  </div>
);

export default function App() {
  return (
    <div className="flex h-screen flex-col overflow-hidden font-['Ubuntu','Noto_Sans',sans-serif]">
      <SystemBar />
      <div className="flex min-h-0 flex-1">
        <Launcher />
        <div className="flex min-w-0 flex-1 flex-col">
          <TabStrip />
          <Toolbar />
          <Bookmarks />
          <div className="flex min-h-0 flex-1">
            <Page />
            <Scrollbar />
          </div>
        </div>
      </div>
    </div>
  );
}
